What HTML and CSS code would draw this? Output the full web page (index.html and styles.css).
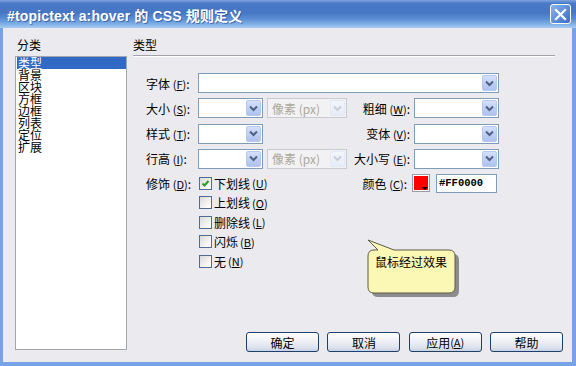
FILE: index.html
```html
<!DOCTYPE html>
<html lang="zh-CN">
<head>
<meta charset="utf-8">
<title>CSS 规则定义</title>
<link rel="stylesheet" href="styles.css">
</head>
<body>
<div class="win">
  <div class="titlebar">
    <span class="title">#topictext a:hover 的 CSS 规则定义</span>
    <span class="close"><svg width="13" height="13" viewBox="0 0 13 13"><path d="M2 2 L11 11 M11 2 L2 11" stroke="#fff" stroke-width="2.2" stroke-linecap="square"/></svg></span>
  </div>
  <div class="frame">
    <div class="left">
      <div class="cap">分类</div>
      <ul class="list">
        <li class="sel">类型</li>
        <li>背景</li>
        <li>区块</li>
        <li>方框</li>
        <li>边框</li>
        <li>列表</li>
        <li>定位</li>
        <li>扩展</li>
      </ul>
    </div>
    <div class="right">
      <div class="head">类型</div>
      <div class="form">
        <div class="row">
          <span class="lbl">字体 <span class="mn">(<u>F</u>)</span>:</span>
          <span class="combo w-font"><span class="dd"><svg width="13" height="15" viewBox="0 0 13 15"><path d="M3 5.5 L6.5 9 L10 5.5" fill="none" stroke="#4d6185" stroke-width="2"/></svg></span></span>
        </div>
        <div class="row">
          <span class="lbl">大小 <span class="mn">(<u>S</u>)</span>:</span>
          <span class="combo w-sm"><span class="dd"><svg width="13" height="15" viewBox="0 0 13 15"><path d="M3 5.5 L6.5 9 L10 5.5" fill="none" stroke="#4d6185" stroke-width="2"/></svg></span></span>
          <span class="combo dis w-unit"><span class="val">像素 (px)</span><span class="dd"><svg width="13" height="15" viewBox="0 0 13 15"><path d="M3 5.5 L6.5 9 L10 5.5" fill="none" stroke="#c9cdd8" stroke-width="2"/></svg></span></span>
          <span class="rlbl">粗细 <span class="mn">(<u>W</u>)</span>:</span>
          <span class="combo w-r"><span class="dd"><svg width="13" height="15" viewBox="0 0 13 15"><path d="M3 5.5 L6.5 9 L10 5.5" fill="none" stroke="#4d6185" stroke-width="2"/></svg></span></span>
        </div>
        <div class="row">
          <span class="lbl">样式 <span class="mn">(<u>T</u>)</span>:</span>
          <span class="combo w-sm"><span class="dd"><svg width="13" height="15" viewBox="0 0 13 15"><path d="M3 5.5 L6.5 9 L10 5.5" fill="none" stroke="#4d6185" stroke-width="2"/></svg></span></span>
          <span class="spacer"></span>
          <span class="rlbl">变体 <span class="mn">(<u>V</u>)</span>:</span>
          <span class="combo w-r"><span class="dd"><svg width="13" height="15" viewBox="0 0 13 15"><path d="M3 5.5 L6.5 9 L10 5.5" fill="none" stroke="#4d6185" stroke-width="2"/></svg></span></span>
        </div>
        <div class="row">
          <span class="lbl">行高 <span class="mn">(<u>I</u>)</span>:</span>
          <span class="combo w-sm"><span class="dd"><svg width="13" height="15" viewBox="0 0 13 15"><path d="M3 5.5 L6.5 9 L10 5.5" fill="none" stroke="#4d6185" stroke-width="2"/></svg></span></span>
          <span class="combo dis w-unit"><span class="val">像素 (px)</span><span class="dd"><svg width="13" height="15" viewBox="0 0 13 15"><path d="M3 5.5 L6.5 9 L10 5.5" fill="none" stroke="#c9cdd8" stroke-width="2"/></svg></span></span>
          <span class="rlbl">大小写 <span class="mn">(<u>E</u>)</span>:</span>
          <span class="combo w-r"><span class="dd"><svg width="13" height="15" viewBox="0 0 13 15"><path d="M3 5.5 L6.5 9 L10 5.5" fill="none" stroke="#4d6185" stroke-width="2"/></svg></span></span>
        </div>
        <div class="row deco">
          <span class="lbl lbl-deco">修饰 <span class="mn">(<u>D</u>)</span>:</span>
          <div class="checks">
            <div class="ck"><span class="box"><svg width="11" height="11" viewBox="0 0 11 11"><path d="M2.5 5.5 L4.5 7.5 L8.5 3" fill="none" stroke="#21a121" stroke-width="2"/></svg></span>下划线 <span class="mn">(<u>U</u>)</span></div>
            <div class="ck"><span class="box"></span>上划线 <span class="mn">(<u>O</u>)</span></div>
            <div class="ck"><span class="box"></span>删除线 <span class="mn">(<u>L</u>)</span></div>
            <div class="ck"><span class="box"></span>闪烁 <span class="mn">(<u>B</u>)</span></div>
            <div class="ck"><span class="box"></span>无 <span class="mn">(<u>N</u>)</span></div>
          </div>
          <div class="color">
            <span class="clbl">颜色 <span class="mn">(<u>C</u>)</span>:</span>
            <span class="swatch"><span class="red"></span><span class="tri"></span></span>
            <span class="hex">#FF0000</span>
          </div>
        </div>
      </div>
      <div class="buttons">
        <span class="btn">确定</span>
        <span class="btn">取消</span>
        <span class="btn">应用 <span class="mn">(<u>A</u>)</span></span>
        <span class="btn">帮助</span>
      </div>
    </div>
  </div>
  <div class="balloon">
    <svg width="100" height="66" viewBox="0 0 100 66">
      <path d="M14 18 L18 18 L8 8 L34 18 L89 18 Q95 18 95 24 L95 55 Q95 61 89 61 L14 61 Q8 61 8 55 L8 24 Q8 18 14 18 Z" fill="#8c8c8c"/>
      <path d="M10 14 L14 14 L4 4 L30 14 L85 14 Q91 14 91 20 L91 51 Q91 57 85 57 L10 57 Q4 57 4 51 L4 20 Q4 14 10 14 Z" fill="#fbf7b4" stroke="#5c5c48" stroke-width="1"/>
    </svg>
    <span class="tip">鼠标经过效果</span>
  </div>
</div>
</body>
</html>
```
FILE: styles.css
```css
* { box-sizing: border-box; }
body {
  margin: 0;
  font-family: "Noto Sans CJK SC", "Liberation Sans", sans-serif;
  font-size: 12px;
  color: #000;
}
.win {
  width: 576px;
  height: 366px;
  display: flex;
  flex-direction: column;
  position: relative;
  background: #ebeaee;
  overflow: hidden;
}
.titlebar {
  height: 28px;
  flex: none;
  display: flex;
  align-items: center;
  justify-content: space-between;
  padding: 1px 5px 0 7px;
  background: linear-gradient(#7ea5de 0, #4a79c6 12%, #4677c4 45%, #5e91d6 70%, #8fbcec 92%, #a8cdf2 100%);
}
.title {
  color: #fff;
  font-family: "Liberation Sans", "Noto Sans CJK SC", sans-serif;
  font-weight: bold;
  font-size: 14px;
  letter-spacing: 0.15px;
  text-shadow: 1px 1px 0 rgba(20, 50, 120, 0.5);
}
.close {
  width: 21px;
  height: 20px;
  margin-top: -1px;
  border: 1px solid #fff;
  border-radius: 3px;
  background: linear-gradient(135deg, #8cb2ec, #4f82d4 70%, #3f6fc4);
  display: flex;
  align-items: center;
  justify-content: center;
}
.frame {
  flex: 1;
  display: flex;
  border-left: 3px solid #77a3e6;
  border-right: 4px solid #77a3e6;
  border-bottom: 4px solid #77a3e6;
}
.left {
  width: 130px;
  flex: none;
  display: flex;
  flex-direction: column;
  padding: 10px 0 12px 12px;
}
.cap {
  line-height: 14px;
  height: 14px;
  margin-bottom: 4px;
  padding-left: 2px;
}
.list {
  flex: 1;
  width: 112px;
  margin: 0;
  padding: 0 0 0 1px;
  list-style: none;
  background: #fff;
  border: 1px solid #a2a6ae;
}
.list li {
  height: 12px;
  line-height: 12px;
  padding-left: 1px;
}
.list .sel {
  background: #316ac5;
  color: #fff;
}
.right {
  flex: 1;
  display: flex;
  flex-direction: column;
  padding: 10px 9px 10px 0;
}
.head {
  line-height: 14px;
  padding-bottom: 3px;
  margin-right: 8px;
  border-bottom: 1px solid #a2a2a8;
  box-shadow: 0 1px 0 #fff;
}
.form {
  margin-top: 17px;
  padding-left: 13px;
  display: flex;
  flex-direction: column;
  gap: 5.3px;
}
.row {
  display: flex;
  align-items: center;
  height: 20px;
}
.lbl {
  width: 52px;
  flex: none;
  white-space: nowrap;
}
.mn {
  font-size: 11px;
}
.combo {
  height: 20px;
  flex: none;
  display: flex;
  justify-content: space-between;
  align-items: center;
  background: #fff;
  border: 1px solid #7f9db9;
  padding: 1px;
}
.dd {
  width: 15px;
  height: 16px;
  margin-left: auto;
  border-radius: 2px;
  border: 1px solid #b5c8ee;
  background: linear-gradient(#d4e0fb, #bccdf3 60%, #aec2ee);
  display: flex;
  align-items: center;
  justify-content: center;
}
.w-font { width: 301px; }
.w-sm { width: 65px; }
.w-unit { width: 80px; margin-left: 4px; }
.w-r { width: 85px; margin-left: 4px; }
.spacer { width: 84px; flex: none; }
.combo.dis {
  background: #f2f1f4;
  border-color: #c9c9d0;
}
.combo.dis .dd {
  border-color: #e2e8f4;
  background: linear-gradient(#f2f5fb, #e6ecf6);
}
.val {
  color: #aca899;
  padding-left: 3px;
}
.rlbl {
  width: 63px;
  flex: none;
  text-align: right;
  white-space: nowrap;
}
.row.deco {
  height: auto;
  align-items: flex-start;
  margin-top: -0.6px;
}
.lbl-deco {
  height: 19.5px;
  line-height: 19.5px;
}
.checks {
  width: 149px;
  flex: none;
  display: flex;
  flex-direction: column;
  padding-left: 1px;
}
.ck {
  height: 19.5px;
  display: flex;
  align-items: center;
  gap: 2px;
}
.box {
  width: 13px;
  height: 13px;
  flex: none;
  border: 1px solid #506c8e;
  background: linear-gradient(135deg, #dad9d6, #fbfbfa 80%);
  display: flex;
  align-items: center;
  justify-content: center;
}
.color {
  height: 19.5px;
  display: flex;
  align-items: center;
}
.clbl {
  width: 60px;
  text-align: right;
  white-space: nowrap;
  margin-right: 5px;
}
.swatch {
  width: 18px;
  height: 18px;
  position: relative;
  border: 1px solid #9c9ca4;
  background: #fff;
  padding: 1px;
}
.red {
  display: block;
  width: 100%;
  height: 100%;
  background: #ff0000;
}
.tri {
  position: absolute;
  right: 1px;
  bottom: 1px;
  width: 0;
  height: 0;
  border-left: 3px solid transparent;
  border-right: 3px solid transparent;
  border-top: 3px solid #000;
}
.hex {
  margin-left: 6px;
  width: 61px;
  height: 19px;
  border: 1px solid #7f9db9;
  background: #fff;
  font-family: "Liberation Mono", monospace;
  font-weight: bold;
  font-size: 10.5px;
  line-height: 17px;
  padding-left: 2px;
}
.buttons {
  margin-top: auto;
  display: flex;
  justify-content: flex-end;
  gap: 8.3px;
}
.btn {
  width: 73px;
  height: 20px;
  border: 1px solid #1f3f6c;
  border-radius: 3px;
  background: linear-gradient(#fefefe, #eef0f5 45%, #dde3ee 80%, #c7d1e4);
  display: flex;
  align-items: center;
  justify-content: center;
}
.balloon {
  position: absolute;
  left: 364px;
  top: 236px;
  width: 100px;
  height: 66px;
}
.balloon svg {
  display: block;
}
.tip {
  position: absolute;
  left: 11px;
  top: 19px;
  line-height: 14px;
  white-space: nowrap;
}
```
